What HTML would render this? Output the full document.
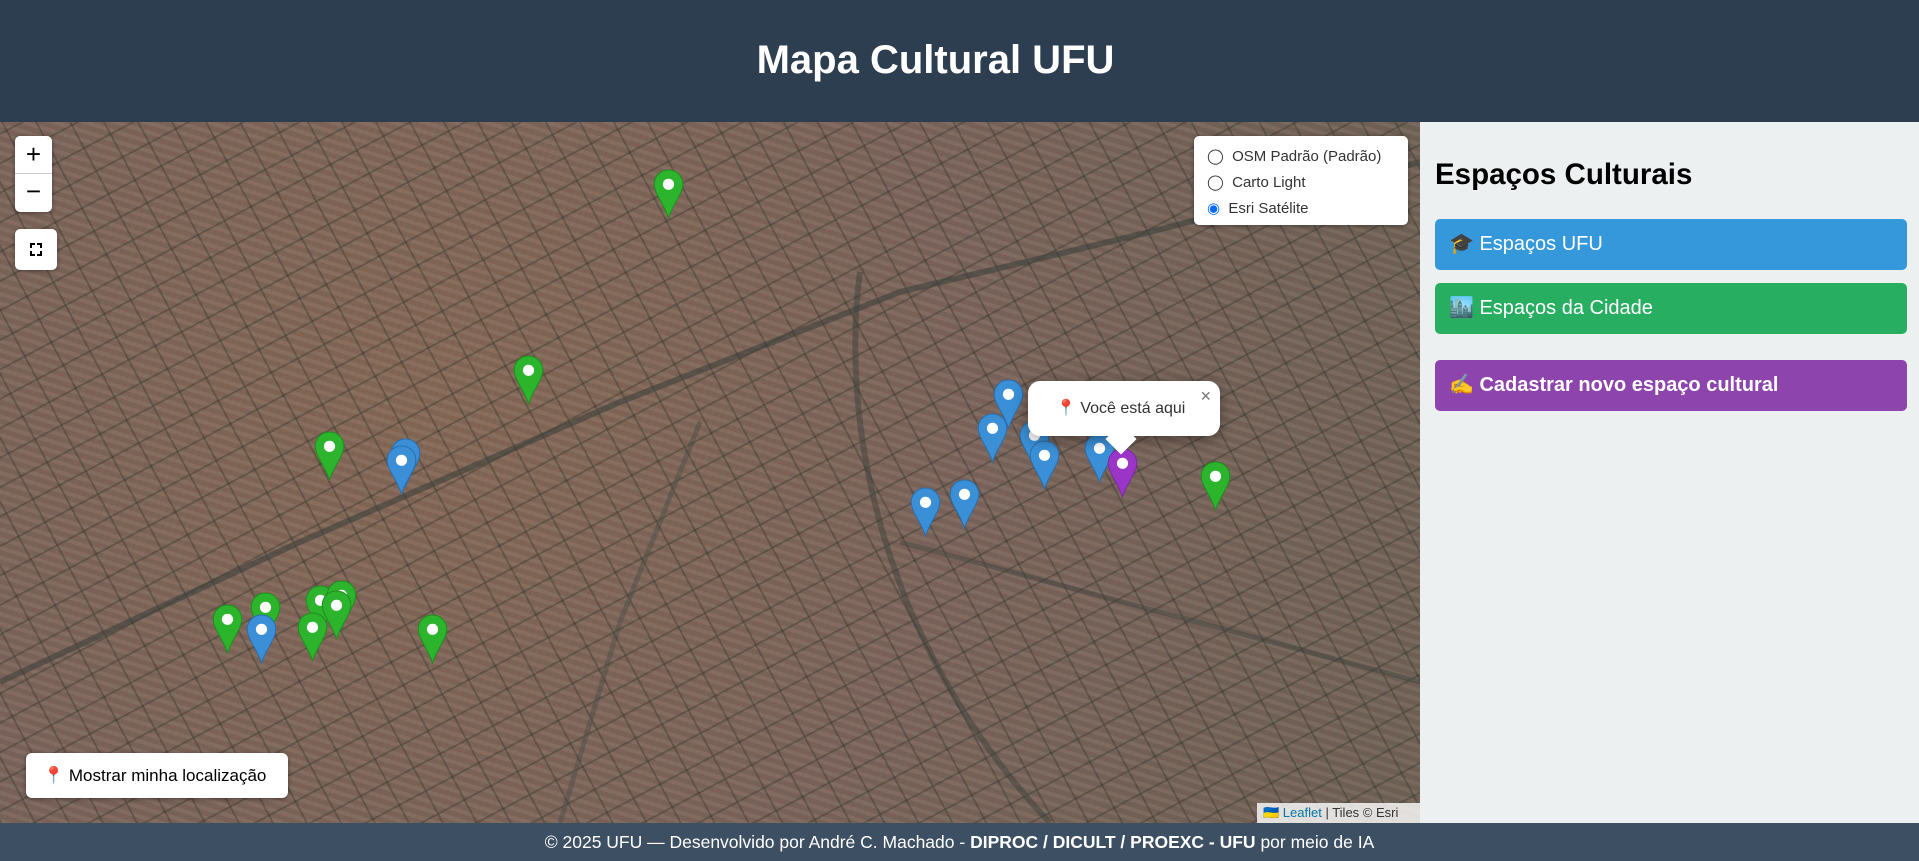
<!DOCTYPE html>
<html><head><meta charset="utf-8"><style>
*{box-sizing:border-box;margin:0;padding:0}
body{width:1919px;height:861px;overflow:hidden;font-family:"Liberation Sans",Arial,sans-serif;background:#ecf0f1;position:relative}
header{position:absolute;left:0;top:0;width:1919px;height:122px;background:#2c3e50;color:#fff;text-align:center;font-weight:bold;font-size:40px;line-height:120px;padding-right:48px}
#map{position:absolute;left:0;top:122px;width:1420px;height:701px;overflow:hidden;
background:
repeating-linear-gradient(62deg,rgba(45,50,42,.35) 0 2px,transparent 2px 30px),
repeating-linear-gradient(-28deg,rgba(45,50,42,.35) 0 2px,transparent 2px 26px),
repeating-linear-gradient(17deg,rgba(200,180,160,.12) 0 4px,transparent 4px 9px),
repeating-linear-gradient(-73deg,rgba(140,80,60,.15) 0 3px,transparent 3px 7px),
radial-gradient(circle at 30% 40%,#806655,#76625a 50%,#6a6055);}
.ctl{position:absolute;background:#fff;border-radius:5px;box-shadow:0 1px 5px rgba(0,0,0,.4)}
.mk{position:absolute;width:31px;height:50px}
footer{position:absolute;left:0;top:823px;width:1919px;height:38px;background:#3d4f63;color:#fff;font-size:17.5px;text-align:center;line-height:38px}
#side{position:absolute;left:1420px;top:122px;width:499px;height:701px;background:#ecf0f1}
.btn{position:absolute;left:15px;width:472px;height:51px;border-radius:5px;color:#fff;font-size:20px;line-height:51px;padding-left:14px}
</style></head><body>
<header>Mapa Cultural UFU</header>
<div id="map">
<svg width="1420" height="701" style="position:absolute;left:0;top:0" fill="none">
<path d="M0 560 L300 420 L620 280 L900 170 L1150 110 L1420 40" stroke="rgba(60,65,60,.6)" stroke-width="6"/>
<path d="M860 150 C840 300 880 520 1050 701" stroke="rgba(60,65,60,.5)" stroke-width="6"/>
<path d="M560 701 L620 500 L700 300" stroke="rgba(70,75,70,.45)" stroke-width="5"/>
<path d="M900 420 L1420 560" stroke="rgba(60,65,60,.45)" stroke-width="5"/>
</svg>
<div class="ctl" style="left:15px;top:14px;width:37px;height:76px">
<div style="height:38px;border-bottom:1px solid #ccc;text-align:center;font-size:26px;line-height:36px">+</div>
<div style="height:37px;text-align:center;font-size:26px;line-height:34px">−</div></div>
<div class="ctl" style="left:15px;top:107px;width:42px;height:41px">
<svg width="42" height="41"><path d="M16 19v-4h4M22 15h4v4M26 22v4h-4M20 26h-4v-4" stroke="#000" stroke-width="2" fill="none"/></svg></div>
<div class="ctl" style="left:1194px;top:14px;width:214px;height:89px;font-size:15px;color:#333;padding:8px 0 0 13px;line-height:26px">
<div>◯&nbsp; OSM Padrão (Padrão)</div><div>◯&nbsp; Carto Light</div><div><span style="color:#0a6cff">◉</span>&nbsp; Esri Satélite</div></div>
<div class="ctl" style="left:26px;top:631px;width:262px;height:45px;font-size:17px;line-height:45px;padding-left:17px;border-radius:6px">📍 Mostrar minha localização</div>
<div style="position:absolute;left:1257px;top:681px;width:163px;height:20px;background:rgba(255,255,255,.8);font-size:13px;line-height:20px;padding-left:6px;color:#333"><span style="color:#0078a8">🇺🇦 Leaflet</span> | Tiles © Esri</div>
<div id="pins"></div>
<div style="position:absolute;left:1028px;top:259px;width:192px;height:55px;background:#fff;border-radius:12px;box-shadow:0 3px 14px rgba(0,0,0,.4);font-size:16px;color:#333;line-height:55px;padding-left:28px">📍 Você está aqui<span style="position:absolute;right:9px;top:-12px;color:#757575;font-size:18px">×</span></div>
<div style="position:absolute;left:1110px;top:306px;width:22px;height:22px;background:#fff;transform:rotate(45deg)"></div>
</div>
<div id="side">
<div style="position:absolute;left:15px;top:36px;font-size:29.5px;font-weight:bold;color:#000">Espaços Culturais</div>
<div class="btn" style="top:97px;background:#3498db">🎓 Espaços UFU</div>
<div class="btn" style="top:161px;background:#27ae60">🏙️ Espaços da Cidade</div>
<div class="btn" style="top:238px;background:#8e44ad;font-weight:bold">✍️ Cadastrar novo espaço cultural</div>
</div>
<footer>© 2025 UFU — Desenvolvido por André C. Machado - <b>DIPROC / DICULT / PROEXC - UFU</b> por meio de IA</footer>
<script>
var m=[[546,150,'g'],[432,302,'g'],[269,364,'g'],[993,389,'g'],[186,506,'g'],[217,496,'g'],[262,490,'g'],[279,486,'g'],[275,494,'g'],[255,512,'g'],[353,514,'g'],
[824,322,'b'],[811,350,'b'],[331,370,'b'],[328,376,'b'],[845,355,'b'],[853,372,'b'],[898,366,'b'],[756,410,'b'],[788,404,'b'],[214,514,'b'],[917,378,'p']];
var c={g:['#2cb52c','#1e8e1e'],b:['#3a8fd6','#2a6fae'],p:['#9b35c8','#7a2aa0']};
var h='';m.forEach(function(a){var x=a[0]*1.224-15.5,y=a[1]*1.224-122-15,k=c[a[2]];
h+='<svg class="mk" style="left:'+x+'px;top:'+y+'px" viewBox="0 0 30 49"><path d="M15 1C7 1 1 7 1 15c0 9 10 20 14 33 4-13 14-24 14-33C29 7 23 1 15 1z" fill="'+k[0]+'" stroke="'+k[1]+'" stroke-width="1"/><circle cx="15" cy="15" r="5.5" fill="#fff"/></svg>';});
document.getElementById('pins').innerHTML=h;
</script>
</body></html>
